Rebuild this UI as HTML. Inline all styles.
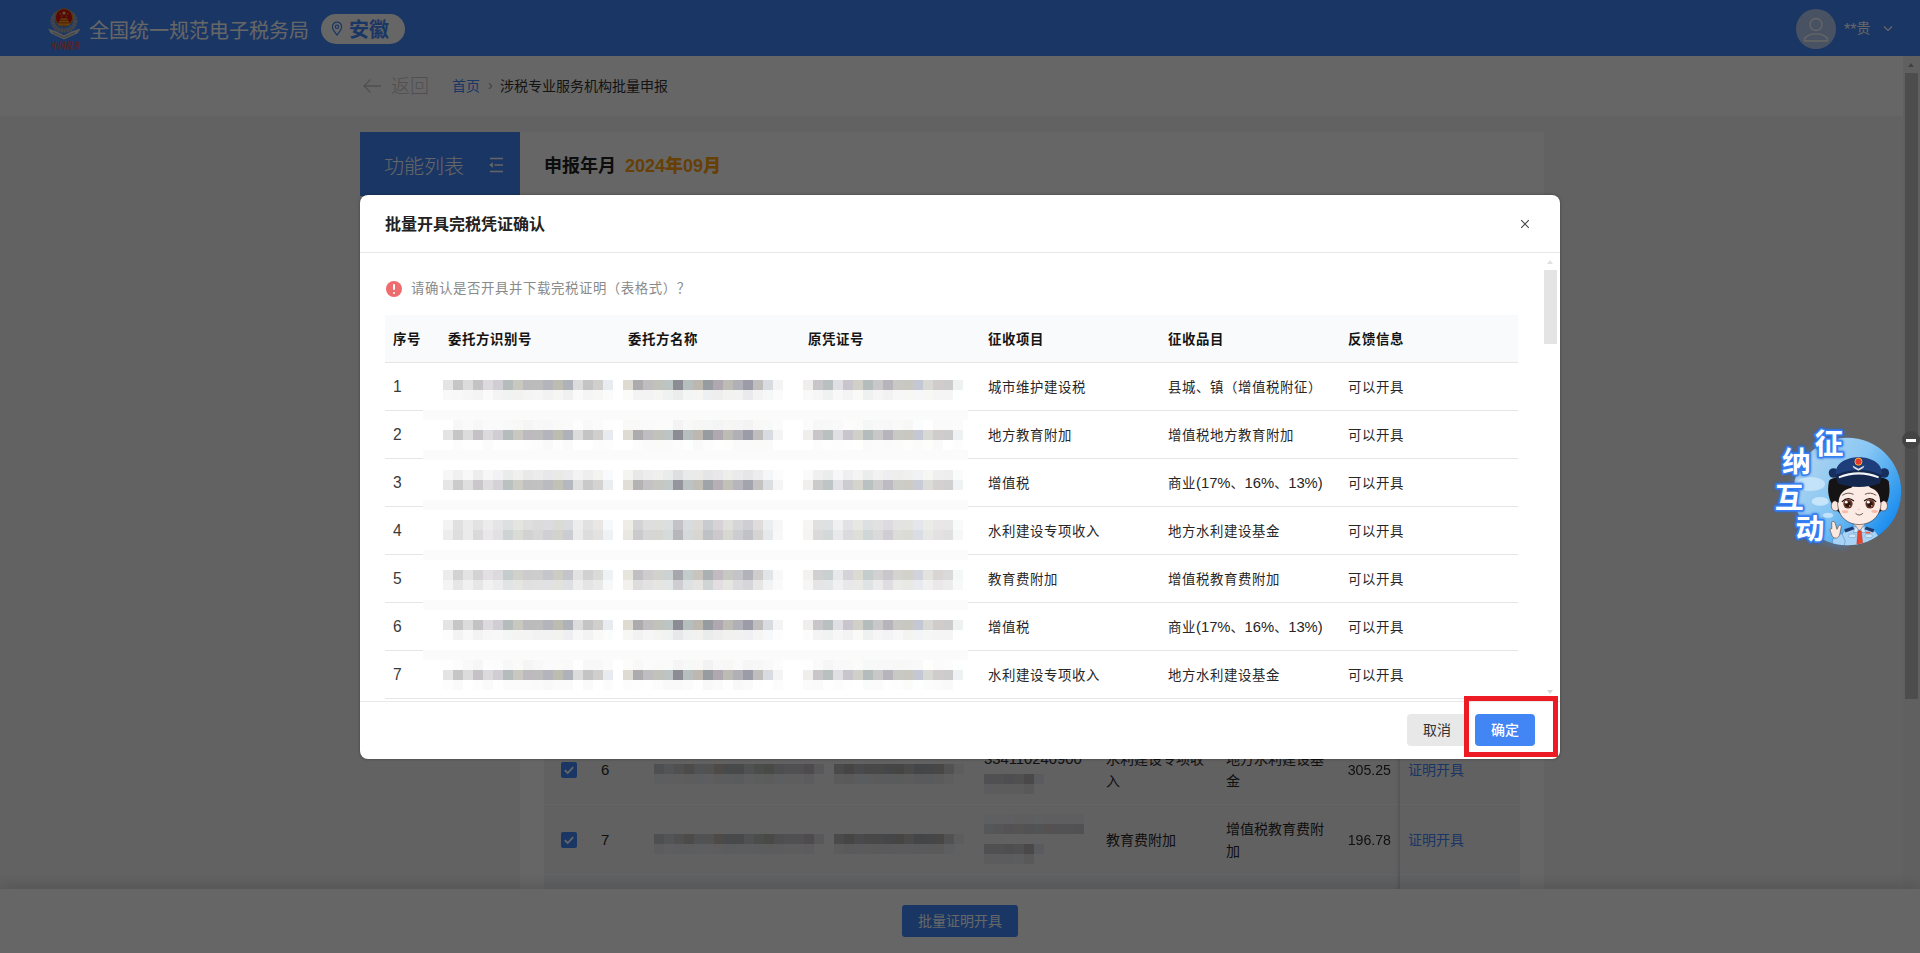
<!DOCTYPE html>
<html lang="zh-CN">
<head>
<meta charset="utf-8">
<title>批量开具完税凭证确认</title>
<style>
*{box-sizing:border-box;margin:0;padding:0}
html,body{width:1920px;height:953px;overflow:hidden}
body{position:relative;background:#f5f5f5;font-family:"Liberation Sans","Noto Sans CJK SC",sans-serif;font-size:14px;color:#333}
.abs{position:absolute}
.ms{position:absolute}
/* header */
#hd{position:absolute;left:0;top:0;width:1920px;height:56px;background:#4387fa}
#hd .title{position:absolute;left:89px;top:0;line-height:62px;font-size:20px;color:#fff;letter-spacing:0;white-space:nowrap}
#pill{position:absolute;left:321px;top:14px;width:84px;height:30px;border-radius:15px;background:#fff}
#pill span{position:absolute;left:28px;top:1px;line-height:30px;font-size:20px;font-weight:700;color:#4387fa;white-space:nowrap}
#avatar{position:absolute;left:1796px;top:9px;width:40px;height:40px;border-radius:20px;background:#b5cdf5}
#uname{position:absolute;left:1844px;top:0;line-height:56px;font-size:14px;color:#fff;white-space:nowrap}
/* breadcrumb */
#bc{position:absolute;left:0;top:56px;width:1903px;height:60px;background:#fff}
#bc .back{position:absolute;left:391px;top:0;line-height:62px;font-size:19px;font-weight:300;color:#c8c8c8;white-space:nowrap}
#bc .home{position:absolute;left:452px;top:0;line-height:61px;font-size:14px;color:#4387fa;white-space:nowrap}
#bc .sep{position:absolute;left:488px;top:0;line-height:59px;font-size:14px;color:#999}
#bc .cur{position:absolute;left:500px;top:0;line-height:61px;font-size:14px;color:#333;white-space:nowrap}
/* side */
#side{position:absolute;left:360px;top:132px;width:160px;height:64px;background:#4387fa}
#side span{position:absolute;left:24px;top:0;line-height:70px;font-size:20px;font-weight:300;color:#fff;white-space:nowrap}
#card{position:absolute;left:520px;top:132px;width:1024px;height:830px;background:#fff}
#card .ym{position:absolute;left:24px;top:0;line-height:68px;font-size:18px;font-weight:700;color:#222;white-space:nowrap}
#card .ym b{color:#ffa00a;margin-left:9px}
#tbl{position:absolute;left:544px;top:700px;width:976px;height:200px;background:#f2f3f6}
.bgrow{position:absolute;left:544px;width:976px;height:1px;background:#fdfdfe}
.bt{position:absolute;font-size:14px;line-height:22px;color:#2a2a2a;white-space:nowrap}
.lnk{color:#4387fa}
.num{transform:scaleX(.945);transform-origin:100% 50%}
.cb{position:absolute;left:561px;width:16px;height:16px;border-radius:2px;background:#4387fa}
#fixcol{position:absolute;left:1398px;top:700px;width:122px;height:200px;background:#f2f3f6;border-left:2px solid #d9dade;box-shadow:-3px 0 5px -3px rgba(0,0,0,.08)}
/* footer */
#ft{position:absolute;left:0;top:889px;width:1920px;height:64px;background:#fff;box-shadow:0 -4px 14px rgba(0,0,0,.14)}
#ft .btn{position:absolute;left:902px;top:16px;width:116px;height:32px;border-radius:3px;background:#4387fa;color:#fff;font-size:14px;line-height:32px;text-align:center}
/* page scrollbar */
#sb{position:absolute;left:1903px;top:56px;width:17px;height:833px;background:#f1f1f1}
#sb .th{position:absolute;left:2px;top:17px;width:13px;height:626px;background:#c1c1c1}
#sb .up{position:absolute;left:5px;top:7px;width:0;height:0;border-left:3.5px solid transparent;border-right:3.5px solid transparent;border-bottom:4px solid #a3a3a3}
#mask{position:absolute;left:0;top:0;width:1920px;height:953px;background:rgba(0,0,0,.6)}
/* modal */
#md{position:absolute;left:360px;top:195px;width:1200px;height:564px;background:#fff;border-radius:8px;overflow:hidden;box-shadow:0 0 3px rgba(0,0,0,.35)}
#md .ttl{position:absolute;left:25px;top:16px;line-height:28px;font-size:16px;font-weight:700;color:#222;white-space:nowrap}
#md .hl{position:absolute;left:0;top:57px;width:1200px;height:1px;background:#e8e8e8}
#md .fl{position:absolute;left:0;top:506px;width:1200px;height:1px;background:#e8e8e8}
#md .tip{position:absolute;left:51px;top:82px;line-height:24px;font-size:13.400px;letter-spacing:.600px;color:#8a8a8a;white-space:nowrap}
#warn{position:absolute;left:26px;top:86px;width:16px;height:16px;border-radius:8px;background:#ee6b6e}
#warn i{position:absolute;left:7px;top:3px;width:2px;height:6px;background:#fff;border-radius:1px}
#warn b{position:absolute;left:7px;top:10.5px;width:2px;height:2px;background:#fff;border-radius:1px}
#th{position:absolute;left:25px;top:120px;width:1133px;height:47px;background:#f9fafb}
.hline{position:absolute;left:25px;width:1133px;height:1px;background:#e6e6e6}
.h{position:absolute;top:120px;line-height:49px;font-size:13.400px;letter-spacing:.600px;font-weight:700;color:#141414;white-space:nowrap}
.c{position:absolute;line-height:49px;font-size:13.400px;letter-spacing:.600px;color:#262626;white-space:nowrap}
.c.n{font-size:15.600px;color:#3a3a3a;line-height:47px;letter-spacing:0}
.c i{font-style:normal;font-size:14.800px;letter-spacing:0}
#msb .th{position:absolute;left:1184px;top:75px;width:13px;height:74px;background:#e4e4e4}
#msb .up{position:absolute;left:1187px;top:65px;width:0;height:0;border-left:3.5px solid transparent;border-right:3.5px solid transparent;border-bottom:4px solid #e0e0e0}
#msb .dn{position:absolute;left:1187px;top:495px;width:0;height:0;border-left:3.5px solid transparent;border-right:3.5px solid transparent;border-top:4px solid #d8d8d8}
#cancel{position:absolute;left:1047px;top:519px;width:60px;height:32px;border-radius:4px;background:#e8e8e8;color:#333;font-size:14px;line-height:32px;text-align:center}
#ok{position:absolute;left:1115px;top:519px;width:60px;height:32px;border-radius:4px;background:#4285f4;color:#fff;font-size:14px;font-weight:500;line-height:32px;text-align:center}
#red{position:absolute;left:1464px;top:696px;width:94px;height:61px;border:5px solid #ed1c24}
#minus{position:absolute;left:1902px;top:431px;width:18px;height:18px;border-radius:9px;background:#444}
#minus i{position:absolute;left:4px;top:8px;width:10px;height:2.500px;background:#fff}
</style>
</head>
<body>
<!-- ============ underlying page ============ -->
<div id="hd">
  <svg class="abs" style="left:44px;top:4px" width="42" height="50" viewBox="0 0 42 50">
    <ellipse cx="20" cy="17" rx="11.3" ry="9.6" fill="none" stroke="#a9adb3" stroke-width="4.400" stroke-dasharray="2.400 0.500"/>
    <path d="M4.200 24.600l7.800 2.600 8 4 8-4 8.600-2.600-2.800 4.600-13.800 6.200-13.400-6.200z" fill="#d9dbde"/>
    <path d="M9 28.500l11 5 11-5" fill="none" stroke="#8f949a" stroke-width="0.900"/>
    <circle cx="20" cy="13.500" r="8.700" fill="#d7140f" stroke="#e8861c" stroke-width="1.100"/>
    <path d="M20 6.800l.6 1.500 1.600.1-1.200 1 .4 1.600-1.400-.9-1.400.9.400-1.600-1.200-1 1.600-.1z" fill="#ffe27a"/>
    <circle cx="16.300" cy="9.800" r="0.600" fill="#ffe27a"/><circle cx="23.700" cy="9.800" r="0.600" fill="#ffe27a"/><circle cx="17.600" cy="12" r="0.600" fill="#ffe27a"/><circle cx="22.400" cy="12" r="0.600" fill="#ffe27a"/>
    <path d="M14.500 18.600h11l-1.200-2.200h-8.600z M16 15.800h8l-.9-1.500h-6.200z M14 19.300h12v2.200h-12z" fill="#f0a326"/>
    <text x="6.500" y="45" textLength="29" lengthAdjust="spacingAndGlyphs" font-size="9.200" font-weight="700" fill="#f04a28" font-family="'Liberation Serif','Noto Serif CJK SC',serif" font-style="italic">中国税务</text>
  </svg>
  <div class="title">全国统一规范电子税务局</div>
  <div id="pill">
    <svg class="abs" style="left:10px;top:7px" width="12" height="16" viewBox="0 0 12 16"><path d="M6 1.200c-2.700 0-4.600 2-4.600 4.500 0 2.700 2.300 5.500 4.600 8.300 2.300-2.800 4.600-5.600 4.600-8.300 0-2.500-1.900-4.500-4.600-4.500z" fill="none" stroke="#4387fa" stroke-width="1.200"/><circle cx="6" cy="5.800" r="1.700" fill="none" stroke="#4387fa" stroke-width="1.200"/></svg>
    <span>安徽</span>
  </div>
  <div id="avatar">
    <svg class="abs" style="left:0;top:0" width="40" height="40" viewBox="0 0 40 40"><circle cx="20" cy="15.500" r="6" fill="none" stroke="#fff" stroke-width="1.300"/><path d="M8.500 32v-2.500c2.500-3.200 7-4.700 11.500-4.700s9 1.500 11.500 4.700v2.500z" fill="none" stroke="#fff" stroke-width="1.300"/></svg>
  </div>
  <div id="uname"><span style="font-size:16px;vertical-align:-1.500px">**</span>贵</div>
  <svg class="abs" style="left:1883px;top:25px" width="10" height="8" viewBox="0 0 10 8"><path d="M1 1.500l4 4 4-4" fill="none" stroke="#fff" stroke-width="1.200"/></svg>
</div>
<div id="bc">
  <svg class="abs" style="left:362px;top:22px" width="20" height="16" viewBox="0 0 20 16"><path d="M19 8H2M8.500 1.500L2 8l6.500 6.500" fill="none" stroke="#c8c8c8" stroke-width="1.400"/></svg>
  <div class="back">返回</div>
  <div class="home">首页</div>
  <div class="sep">›</div>
  <div class="cur">涉税专业服务机构批量申报</div>
</div>
<div id="side"><span>功能列表</span>
  <svg class="abs" style="left:128px;top:25px" width="16" height="16" viewBox="0 0 16 16"><path d="M2 1.500h13M6.500 8h8.500M2 14.500h13" stroke="#fff" stroke-width="1.300" fill="none"/><path d="M4.800 5.200v5.600l-3.600-2.800z" fill="#fff"/></svg>
</div>
<div id="card"><div class="ym">申报年月<b>2024年09月</b></div></div>
<div id="tbl"></div>
<div class="bgrow" style="top:804px"></div>
<div class="bgrow" style="top:874px"></div>
<div class="ms" style="left:654px;top:764px;width:170px;height:10px;background:linear-gradient(90deg,#c4c6c8 0px 10px,#d0d2d6 10px 20px,#c8c8c8 20px 30px,#c0bcb8 30px 40px,#c8ccd0 40px 50px,#ccccd0 50px 60px,#c0b8b4 60px 70px,#b4b6b8 70px 80px,#b4b8ba 80px 90px,#c8cad0 90px 100px,#bcc0bc 100px 110px,#b4b8b0 110px 120px,#c4c4c8 120px 130px,#c8c8cc 130px 140px,#c8c8ca 140px 150px,#c0bcc0 150px 160px,#dcdde2 160px 170px)"></div>
<div class="ms" style="left:654px;top:774px;width:160px;height:10px;background:linear-gradient(90deg,#e9ebed 0px 10px,#ebecef 10px 20px,#eaebed 20px 30px,#e8e8e9 30px 40px,#e7e9ec 40px 50px,#ebebef 50px 60px,#e7e6e8 60px 70px,#e4e5e8 70px 80px,#e2e4e7 80px 90px,#eaebef 90px 100px,#e6e8e9 100px 110px,#e5e7e7 110px 120px,#e9eaed 120px 130px,#eaeaee 130px 140px,#eaebee 140px 150px,#e7e6ea 150px 160px)"></div>
<div class="ms" style="left:834px;top:764px;width:130px;height:10px;background:linear-gradient(90deg,#b8b8ba 0px 10px,#b0acaa 10px 20px,#b8b8c0 20px 30px,#b4b4b6 30px 40px,#b4b4b4 40px 50px,#acaeb4 50px 60px,#aeaca8 60px 70px,#b8b8bc 70px 80px,#a8acb0 80px 90px,#aab0b2 90px 100px,#b4b2b0 100px 110px,#ccccd0 110px 120px,#e6e8ee 120px 130px)"></div>
<div class="ms" style="left:834px;top:774px;width:120px;height:10px;background:linear-gradient(90deg,#e3e4e6 0px 10px,#e2e2e3 10px 20px,#e4e5e9 20px 30px,#e4e5e8 30px 40px,#e3e4e6 40px 50px,#e2e3e7 50px 60px,#e2e3e4 60px 70px,#e5e6e9 70px 80px,#e0e2e5 80px 90px,#dfe1e4 90px 100px,#e4e4e6 100px 110px,#eaebee 110px 120px)"></div>
<div class="ms" style="left:654px;top:834px;width:170px;height:10px;background:linear-gradient(90deg,#c4c6c8 0px 10px,#d0d2d6 10px 20px,#c8c8c8 20px 30px,#c0bcb8 30px 40px,#c8ccd0 40px 50px,#ccccd0 50px 60px,#c0b8b4 60px 70px,#b4b6b8 70px 80px,#b4b8ba 80px 90px,#c8cad0 90px 100px,#bcc0bc 100px 110px,#b4b8b0 110px 120px,#c4c4c8 120px 130px,#c8c8cc 130px 140px,#c8c8ca 140px 150px,#c0bcc0 150px 160px,#dcdde2 160px 170px)"></div>
<div class="ms" style="left:654px;top:844px;width:160px;height:10px;background:linear-gradient(90deg,#e6e7ea 0px 10px,#ebecef 10px 20px,#e7e8ea 20px 30px,#e8e8e9 30px 40px,#e8eaed 40px 50px,#ebecef 50px 60px,#e9e8e9 60px 70px,#e4e6e8 70px 80px,#e6e8eb 80px 90px,#e8e9ed 90px 100px,#e4e6e8 100px 110px,#e5e6e7 110px 120px,#e6e7ea 120px 130px,#e8e8ec 130px 140px,#e8e9ec 140px 150px,#e7e7eb 150px 160px)"></div>
<div class="ms" style="left:834px;top:834px;width:130px;height:10px;background:linear-gradient(90deg,#b8b8ba 0px 10px,#b0acaa 10px 20px,#b8b8c0 20px 30px,#b4b4b6 30px 40px,#b4b4b4 40px 50px,#acaeb4 50px 60px,#aeaca8 60px 70px,#b8b8bc 70px 80px,#a8acb0 80px 90px,#aab0b2 90px 100px,#b4b2b0 100px 110px,#ccccd0 110px 120px,#e6e8ee 120px 130px)"></div>
<div class="ms" style="left:834px;top:844px;width:120px;height:10px;background:linear-gradient(90deg,#e5e6e9 0px 10px,#e2e1e3 10px 20px,#e3e4e8 20px 30px,#e3e4e7 30px 40px,#e1e2e4 40px 50px,#e0e1e5 50px 60px,#e3e3e4 60px 70px,#e4e4e8 70px 80px,#e0e1e5 80px 90px,#dee0e3 90px 100px,#e2e2e4 100px 110px,#e9eaed 110px 120px)"></div>
<div class="ms" style="left:984px;top:774px;width:60px;height:10px;background:linear-gradient(90deg,#c8c8cc 0px 10px,#c8c8ca 10px 20px,#c4c4c8 20px 30px,#c8c8c8 30px 40px,#b8b4b4 40px 50px,#e2e4ea 50px 60px)"></div>
<div class="ms" style="left:984px;top:784px;width:50px;height:10px;background:linear-gradient(90deg,#e6e7ea 0px 10px,#e5e6e8 10px 20px,#e5e6e9 20px 30px,#e6e7e9 30px 40px,#dfdee0 40px 50px)"></div>
<div class="ms" style="left:984px;top:814px;width:100px;height:10px;background:linear-gradient(90deg,#ecedf0 0px 10px,#eeeef2 10px 20px,#eeeef2 20px 30px,#ececee 30px 40px,#ececf0 40px 50px,#ecedf0 50px 60px,#ecebed 60px 70px,#ebecef 70px 80px,#ebecef 80px 90px,#ebebef 90px 100px)"></div>
<div class="ms" style="left:984px;top:824px;width:100px;height:10px;background:linear-gradient(90deg,#d8d9dc 0px 10px,#d5d5d9 10px 20px,#d2ced2 20px 30px,#d5d2cf 30px 40px,#ceced2 40px 50px,#ced0d2 50px 60px,#d5cbc8 60px 70px,#ceced2 70px 80px,#ceced2 80px 90px,#cbcbcf 90px 100px)"></div>
<div class="ms" style="left:984px;top:844px;width:60px;height:10px;background:linear-gradient(90deg,#c8c8cc 0px 10px,#c8c8ca 10px 20px,#c4c4c8 20px 30px,#c8c8c8 30px 40px,#b8b4b4 40px 50px,#e2e4ea 50px 60px)"></div>
<div class="ms" style="left:984px;top:854px;width:50px;height:10px;background:linear-gradient(90deg,#e5e5e9 0px 10px,#e7e7ea 10px 20px,#e4e5e8 20px 30px,#e7e8ea 30px 40px,#dfdfe1 40px 50px)"></div>
<div class="cb" style="top:762px"><svg class="abs" style="left:0;top:0" width="16" height="16" viewBox="0 0 16 16"><path d="M3.800 8.200l2.900 2.800 5.500-5.800" fill="none" stroke="#fff" stroke-width="1.800"/></svg></div>
<div class="cb" style="top:832px"><svg class="abs" style="left:0;top:0" width="16" height="16" viewBox="0 0 16 16"><path d="M3.800 8.200l2.900 2.800 5.500-5.800" fill="none" stroke="#fff" stroke-width="1.800"/></svg></div>
<div class="bt" style="left:601px;top:759px;font-size:15px">6</div>
<div class="bt" style="left:601px;top:829px;font-size:15px">7</div>
<div class="bt" style="left:984px;top:748px;font-size:14.800px">334110240900</div>
<div class="bt" style="left:1106px;top:748px">水利建设专项收<br>入</div>
<div class="bt" style="left:1226px;top:748px">地方水利建设基<br>金</div>
<div class="bt" style="left:1106px;top:829px">教育费附加</div>
<div class="bt" style="left:1226px;top:818px">增值税教育费附<br>加</div>
<div class="bt num" style="left:1300px;top:759px;width:91px;text-align:right;font-size:15px">305.25</div>
<div class="bt num" style="left:1300px;top:829px;width:91px;text-align:right;font-size:15px">196.78</div>
<div id="fixcol"></div>
<div class="bgrow" style="top:804px;left:1400px;width:120px"></div>
<div class="bgrow" style="top:874px;left:1400px;width:120px"></div>
<div class="bt lnk" style="left:1408px;top:759px">证明开具</div>
<div class="bt lnk" style="left:1408px;top:829px">证明开具</div>
<div id="sb"><div class="up"></div><div class="th"></div></div>
<div id="ft"><div class="btn">批量证明开具</div></div>
<div id="mask"></div>
<!-- ============ modal ============ -->
<div id="md">
  <div class="ttl">批量开具完税凭证确认</div>
  <svg class="abs" style="left:1160px;top:24px" width="10" height="10" viewBox="0 0 10 10"><path d="M1.200 1.200l7.600 7.600M8.800 1.200l-7.600 7.600" stroke="#444" stroke-width="1.100" fill="none"/></svg>
  <div class="hl"></div>
  <div id="warn"><i></i><b></b></div>
  <div class="tip">请确认是否开具并下载完税证明（表格式）？</div>
  <div id="th"></div>
  <div class="h" style="left:33px">序号</div>
  <div class="h" style="left:88px">委托方识别号</div>
  <div class="h" style="left:268px">委托方名称</div>
  <div class="h" style="left:448px">原凭证号</div>
  <div class="h" style="left:628px">征收项目</div>
  <div class="h" style="left:808px">征收品目</div>
  <div class="h" style="left:988px">反馈信息</div>
  <div class="hline" style="top:167px"></div>
  <div class="hline" style="top:215px"></div>
  <div class="hline" style="top:263px"></div>
  <div class="hline" style="top:311px"></div>
  <div class="hline" style="top:359px"></div>
  <div class="hline" style="top:407px"></div>
  <div class="hline" style="top:455px"></div>
  <div class="hline" style="top:503px"></div>
  <div class="abs" style="left:63px;top:175px;width:545px;height:320px;background:#fff"></div>
<div class="ms" style="left:63px;top:215px;width:545px;height:10px;background:#fbfbfb"></div>
<div class="ms" style="left:63px;top:255px;width:545px;height:10px;background:#fbfbfb"></div>
<div class="ms" style="left:63px;top:305px;width:545px;height:10px;background:#fbfbfb"></div>
<div class="ms" style="left:63px;top:355px;width:545px;height:10px;background:#fbfbfb"></div>
<div class="ms" style="left:63px;top:405px;width:545px;height:10px;background:#fbfbfb"></div>
<div class="ms" style="left:63px;top:455px;width:545px;height:10px;background:#fbfbfb"></div>
<div class="ms" style="left:83px;top:185px;width:170px;height:10px;background:linear-gradient(90deg,#e4e4e4 0px 10px,#c6c6c6 10px 20px,#dcdcdc 20px 30px,#c4c2c4 30px 40px,#dcdadc 40px 50px,#d0ced4 50px 60px,#b4bcbc 60px 70px,#c8c8c0 70px 80px,#bcbabc 80px 90px,#bcbcbc 90px 100px,#b4b4bc 100px 110px,#bcbcb0 110px 120px,#b0b2ba 120px 130px,#dcdcdc 130px 140px,#c4c4c4 140px 150px,#d0cfcd 150px 160px,#e8ecf0 160px 170px)"></div>
<div class="ms" style="left:263px;top:185px;width:160px;height:10px;background:linear-gradient(90deg,#dddbd2 0px 10px,#acacae 10px 20px,#bfbdbf 20px 30px,#c1c2ba 30px 40px,#bcc4c4 40px 50px,#8c8c94 50px 60px,#b6bebe 60px 70px,#bcb8b0 70px 80px,#969ca0 80px 90px,#b0a8b0 90px 100px,#bcbcb4 100px 110px,#b0b0b6 110px 120px,#9c9ca8 120px 130px,#c0bebc 130px 140px,#d8dce0 140px 150px,#f4f4f4 150px 160px)"></div>
<div class="ms" style="left:443px;top:185px;width:160px;height:10px;background:linear-gradient(90deg,#f0eeec 0px 10px,#c8c6c8 10px 20px,#b8c0c0 20px 30px,#e0dfe4 30px 40px,#c8c6cc 40px 50px,#d0d0c8 50px 60px,#b4bcbc 60px 70px,#c8c8c8 70px 80px,#b8b4bc 80px 90px,#c8c8c4 90px 100px,#c8c8c0 100px 110px,#c4c8d4 110px 120px,#d8d8d4 120px 130px,#d0cccc 130px 140px,#cccccc 140px 150px,#eef2f2 150px 160px)"></div>
<div class="ms" style="left:83px;top:195px;width:170px;height:10px;background:linear-gradient(90deg,#f9f9f9 0px 10px,#f8f8f8 10px 20px,#f6f6f6 20px 30px,#f4f4f4 30px 40px,#fafafa 40px 50px,#f4f4f5 50px 60px,#f1f3f3 60px 70px,#f2f2f1 70px 80px,#f4f4f4 80px 90px,#f5f5f5 90px 100px,#f2f2f3 100px 110px,#f5f5f3 110px 120px,#f0f0f1 120px 130px,#fafafa 130px 140px,#f5f5f5 140px 150px,#f7f7f6 150px 160px,#fbfbfc 160px 170px)"></div>
<div class="ms" style="left:263px;top:195px;width:160px;height:10px;background:linear-gradient(90deg,#fbfbf9 0px 10px,#f3f3f3 10px 20px,#f3f3f3 20px 30px,#f5f5f4 30px 40px,#f0f2f2 40px 50px,#ececed 50px 60px,#f3f4f4 60px 70px,#f6f5f4 70px 80px,#eeeff0 80px 90px,#efeeef 90px 100px,#f2f2f1 100px 110px,#f2f2f3 110px 120px,#eaeaec 120px 130px,#f3f3f3 130px 140px,#f6f7f7 140px 150px,#fbfbfb 150px 160px)"></div>
<div class="ms" style="left:443px;top:195px;width:160px;height:10px;background:linear-gradient(90deg,#faf9f9 0px 10px,#f7f6f7 10px 20px,#f0f1f1 20px 30px,#f8f8f9 30px 40px,#f4f4f5 40px 50px,#f9f9f7 50px 60px,#eff0f0 60px 70px,#f5f5f5 70px 80px,#f3f2f3 80px 90px,#f7f7f7 90px 100px,#f7f7f6 100px 110px,#f7f7f9 110px 120px,#f7f7f6 120px 130px,#f6f5f5 130px 140px,#f5f5f5 140px 150px,#feffff 150px 160px)"></div>
<div class="ms" style="left:83px;top:225px;width:170px;height:10px;background:linear-gradient(90deg,#ffffff 0px 10px,#f7f7f7 10px 20px,#fafafa 20px 30px,#f7f7f7 30px 40px,#fafafa 40px 50px,#fafafb 50px 60px,#f8f9f9 60px 70px,#f8f8f7 70px 80px,#f5f5f5 80px 90px,#f8f8f8 90px 100px,#f7f7f8 100px 110px,#f9f9f7 110px 120px,#fafafb 120px 130px,#fdfdfd 130px 140px,#f9f9f9 140px 150px,#fbfbfb 150px 160px,#fefeff 160px 170px)"></div>
<div class="ms" style="left:263px;top:225px;width:160px;height:10px;background:linear-gradient(90deg,#f9f9f8 0px 10px,#f9f9f9 10px 20px,#fafafa 20px 30px,#fbfbfa 30px 40px,#fafbfb 40px 50px,#f3f3f4 50px 60px,#f7f8f8 60px 70px,#f6f6f5 70px 80px,#f5f6f6 80px 90px,#f4f4f4 90px 100px,#f6f6f5 100px 110px,#f5f5f6 110px 120px,#f3f3f4 120px 130px,#f8f8f7 130px 140px,#f8f9f9 140px 150px,#fbfbfb 150px 160px)"></div>
<div class="ms" style="left:443px;top:225px;width:160px;height:10px;background:linear-gradient(90deg,#fbfbfb 0px 10px,#f7f7f7 10px 20px,#f7f8f8 20px 30px,#f9f9f9 30px 40px,#fcfcfc 40px 50px,#fbfbfa 50px 60px,#f5f6f6 60px 70px,#f8f8f8 70px 80px,#f7f7f7 80px 90px,#f9f9f8 90px 100px,#f7f7f6 100px 110px,#fbfcfd 110px 120px,#fefefe 120px 130px,#fafafa 130px 140px,#fafafa 140px 150px,#fbfbfb 150px 160px)"></div>
<div class="ms" style="left:83px;top:235px;width:170px;height:10px;background:linear-gradient(90deg,#e4e4e4 0px 10px,#c6c6c6 10px 20px,#dcdcdc 20px 30px,#c4c2c4 30px 40px,#dcdadc 40px 50px,#d0ced4 50px 60px,#b4bcbc 60px 70px,#c8c8c0 70px 80px,#bcbabc 80px 90px,#bcbcbc 90px 100px,#b4b4bc 100px 110px,#bcbcb0 110px 120px,#b0b2ba 120px 130px,#dcdcdc 130px 140px,#c4c4c4 140px 150px,#d0cfcd 150px 160px,#e8ecf0 160px 170px)"></div>
<div class="ms" style="left:263px;top:235px;width:160px;height:10px;background:linear-gradient(90deg,#dddbd2 0px 10px,#acacae 10px 20px,#bfbdbf 20px 30px,#c1c2ba 30px 40px,#bcc4c4 40px 50px,#8c8c94 50px 60px,#b6bebe 60px 70px,#bcb8b0 70px 80px,#969ca0 80px 90px,#b0a8b0 90px 100px,#bcbcb4 100px 110px,#b0b0b6 110px 120px,#9c9ca8 120px 130px,#c0bebc 130px 140px,#d8dce0 140px 150px,#f4f4f4 150px 160px)"></div>
<div class="ms" style="left:443px;top:235px;width:160px;height:10px;background:linear-gradient(90deg,#f0eeec 0px 10px,#c8c6c8 10px 20px,#b8c0c0 20px 30px,#e0dfe4 30px 40px,#c8c6cc 40px 50px,#d0d0c8 50px 60px,#b4bcbc 60px 70px,#c8c8c8 70px 80px,#b8b4bc 80px 90px,#c8c8c4 90px 100px,#c8c8c0 100px 110px,#c4c8d4 110px 120px,#d8d8d4 120px 130px,#d0cccc 130px 140px,#cccccc 140px 150px,#eef2f2 150px 160px)"></div>
<div class="ms" style="left:83px;top:245px;width:170px;height:10px;background:linear-gradient(90deg,#ffffff 0px 10px,#fcfcfc 10px 20px,#fefefe 20px 30px,#fefefe 30px 40px,#fbfbfb 40px 50px,#fefefe 50px 60px,#fefefe 60px 70px,#fefefe 70px 80px,#fdfdfd 80px 90px,#fcfcfc 90px 100px,#f9f9fa 100px 110px,#fdfdfd 110px 120px,#fafafb 120px 130px,#ffffff 130px 140px,#ffffff 140px 150px,#fcfcfc 150px 160px,#fdfdfe 160px 170px)"></div>
<div class="ms" style="left:263px;top:245px;width:160px;height:10px;background:linear-gradient(90deg,#ffffff 0px 10px,#fcfcfc 10px 20px,#fafafa 20px 30px,#fafaf9 30px 40px,#fafafa 40px 50px,#fcfcfc 50px 60px,#fdfefe 60px 70px,#faf9f9 70px 80px,#fcfcfc 80px 90px,#fefefe 90px 100px,#fdfdfc 100px 110px,#fafafa 110px 120px,#fafafb 120px 130px,#fafaf9 130px 140px,#fafafb 140px 150px,#ffffff 150px 160px)"></div>
<div class="ms" style="left:443px;top:245px;width:160px;height:10px;background:linear-gradient(90deg,#ffffff 0px 10px,#fcfcfc 10px 20px,#fefefe 20px 30px,#fdfdfd 30px 40px,#fefeff 40px 50px,#fffffe 50px 60px,#fafafa 60px 70px,#fbfbfb 70px 80px,#fafafa 80px 90px,#fbfbfa 90px 100px,#fdfdfc 100px 110px,#fbfbfb 110px 120px,#fdfdfc 120px 130px,#fafafa 130px 140px,#ffffff 140px 150px,#fdfdfd 150px 160px)"></div>
<div class="ms" style="left:83px;top:275px;width:170px;height:10px;background:linear-gradient(90deg,#f7f7f7 0px 10px,#f0f0f0 10px 20px,#f8f8f8 20px 30px,#eeedee 30px 40px,#f8f7f8 40px 50px,#f2f1f3 50px 60px,#eaecec 60px 70px,#f0f0ee 70px 80px,#e9e9e9 80px 90px,#ececec 90px 100px,#e8e8ea 100px 110px,#e9e9e6 110px 120px,#ebebed 120px 130px,#f3f3f3 130px 140px,#eeeeee 140px 150px,#f3f3f2 150px 160px,#f9fafb 160px 170px)"></div>
<div class="ms" style="left:263px;top:275px;width:160px;height:10px;background:linear-gradient(90deg,#f4f4f1 0px 10px,#e8e8e8 10px 20px,#ededed 20px 30px,#eff0ed 30px 40px,#eaecec 40px 50px,#dfdfe1 50px 60px,#e9ebeb 60px 70px,#ebeae8 70px 80px,#e3e5e6 80px 90px,#e9e7e9 90px 100px,#ededea 100px 110px,#eaeaec 110px 120px,#e6e6e9 120px 130px,#edecec 130px 140px,#f5f6f7 140px 150px,#fcfcfc 150px 160px)"></div>
<div class="ms" style="left:443px;top:275px;width:160px;height:10px;background:linear-gradient(90deg,#fbfafa 0px 10px,#f1f0f1 10px 20px,#ebeded 20px 30px,#f7f6f8 30px 40px,#efeff1 40px 50px,#f4f4f2 50px 60px,#ebeded 60px 70px,#f2f2f2 70px 80px,#eeedef 80px 90px,#eeeeed 90px 100px,#f0f0ee 100px 110px,#f1f2f6 110px 120px,#f6f6f5 120px 130px,#f0efef 130px 140px,#eeeeee 140px 150px,#fafbfb 150px 160px)"></div>
<div class="ms" style="left:83px;top:285px;width:170px;height:10px;background:linear-gradient(90deg,#e6e6e6 0px 10px,#cbcbcb 10px 20px,#dfdfdf 20px 30px,#c9c7c9 30px 40px,#dfdddf 40px 50px,#d4d2d7 50px 60px,#bac1c1 60px 70px,#ccccc5 70px 80px,#c1c0c1 80px 90px,#c1c1c1 90px 100px,#babac1 100px 110px,#c1c1b6 110px 120px,#b6b8c0 120px 130px,#dfdfdf 130px 140px,#c9c9c9 140px 150px,#d4d3d1 150px 160px,#eaeef1 160px 170px)"></div>
<div class="ms" style="left:263px;top:285px;width:160px;height:10px;background:linear-gradient(90deg,#e0ded6 0px 10px,#b3b3b4 10px 20px,#c4c2c4 20px 30px,#c6c7c0 30px 40px,#c1c9c9 40px 50px,#95959d 50px 60px,#bcc3c3 60px 70px,#c1beb6 70px 80px,#9ea4a8 80px 90px,#b6afb6 90px 100px,#c1c1ba 100px 110px,#b6b6bc 110px 120px,#a4a4af 120px 130px,#c5c3c1 130px 140px,#dbdfe2 140px 150px,#f5f5f5 150px 160px)"></div>
<div class="ms" style="left:443px;top:285px;width:160px;height:10px;background:linear-gradient(90deg,#f1efee 0px 10px,#cccbcc 10px 20px,#bec5c5 20px 30px,#e2e2e6 30px 40px,#cccbd0 40px 50px,#d4d4cc 50px 60px,#bac1c1 60px 70px,#cccccc 70px 80px,#bebac1 80px 90px,#ccccc9 90px 100px,#ccccc5 100px 110px,#c9ccd7 110px 120px,#dbdbd7 120px 130px,#d4d0d0 130px 140px,#d0d0d0 140px 150px,#eff3f3 150px 160px)"></div>
<div class="ms" style="left:83px;top:325px;width:170px;height:10px;background:linear-gradient(90deg,#f3f3f3 0px 10px,#e0e0e0 10px 20px,#ebebeb 20px 30px,#e3e2e3 30px 40px,#edeced 40px 50px,#e5e4e7 50px 60px,#dce0e0 60px 70px,#e4e4e0 70px 80px,#dfdedf 80px 90px,#dbdbdb 90px 100px,#dcdce0 100px 110px,#dbdbd5 110px 120px,#dadbdf 120px 130px,#ededed 130px 140px,#e1e1e1 140px 150px,#e8e7e6 150px 160px,#f6f8fa 160px 170px)"></div>
<div class="ms" style="left:263px;top:325px;width:160px;height:10px;background:linear-gradient(90deg,#edece7 0px 10px,#d3d3d4 10px 20px,#dfdedf 20px 30px,#dedfdb 30px 40px,#dbdfdf 40px 50px,#c3c3c7 50px 60px,#d8dcdc 60px 70px,#dcdad6 70px 80px,#c9ccce 80px 90px,#d6d2d6 90px 100px,#dfdfdb 100px 110px,#d6d6d9 110px 120px,#ceced4 120px 130px,#dedddc 130px 140px,#ebedef 140px 150px,#f7f7f7 150px 160px)"></div>
<div class="ms" style="left:443px;top:325px;width:160px;height:10px;background:linear-gradient(90deg,#f6f5f4 0px 10px,#e1e0e1 10px 20px,#dde1e1 20px 30px,#f0eff2 30px 40px,#e2e1e4 40px 50px,#e7e7e3 50px 60px,#dce0e0 60px 70px,#e1e1e1 70px 80px,#dddbdf 80px 90px,#e3e3e1 90px 100px,#e3e3df 100px 110px,#e4e6ec 110px 120px,#ebebe9 120px 130px,#e8e6e6 130px 140px,#e7e7e7 140px 150px,#f9fbfb 150px 160px)"></div>
<div class="ms" style="left:83px;top:335px;width:170px;height:10px;background:linear-gradient(90deg,#ededed 0px 10px,#dedede 10px 20px,#ebebeb 20px 30px,#dbdadb 30px 40px,#e9e7e9 40px 50px,#e1e0e3 50px 60px,#ced3d3 60px 70px,#dbdbd6 70px 80px,#d3d2d3 80px 90px,#d7d7d7 90px 100px,#cfcfd4 100px 110px,#d3d3cc 110px 120px,#cccdd2 120px 130px,#ebebeb 130px 140px,#dddddd 140px 150px,#e3e2e1 150px 160px,#eff2f4 160px 170px)"></div>
<div class="ms" style="left:263px;top:335px;width:160px;height:10px;background:linear-gradient(90deg,#e8e7e2 0px 10px,#cacacc 10px 20px,#d7d6d7 20px 30px,#d7d7d2 30px 40px,#d5dada 40px 50px,#b6b6bb 50px 60px,#d5d9d9 60px 70px,#d8d6d1 70px 80px,#bec2c4 80px 90px,#ccc8cc 90px 100px,#d8d8d3 100px 110px,#cdcdd1 110px 120px,#c1c1c8 120px 130px,#d5d4d2 130px 140px,#e6e9eb 140px 150px,#f8f8f8 150px 160px)"></div>
<div class="ms" style="left:443px;top:335px;width:160px;height:10px;background:linear-gradient(90deg,#f6f4f3 0px 10px,#dbdadb 10px 20px,#d3d8d8 20px 30px,#e9e8eb 30px 40px,#dbdade 40px 50px,#dfdfda 50px 60px,#d0d5d5 60px 70px,#dadada 70px 80px,#d0ced3 80px 90px,#dcdcd9 90px 100px,#dbdbd6 100px 110px,#dbdde5 110px 120px,#e7e7e5 120px 130px,#e3e1e1 130px 140px,#e0e0e0 140px 150px,#f6f8f8 150px 160px)"></div>
<div class="ms" style="left:83px;top:375px;width:170px;height:10px;background:linear-gradient(90deg,#ececec 0px 10px,#d2d2d2 10px 20px,#e3e3e3 20px 30px,#d4d2d4 30px 40px,#e2e0e2 40px 50px,#dcdadf 50px 60px,#c5cccc 60px 70px,#d1d1cb 70px 80px,#cdcbcd 80px 90px,#cdcdcd 90px 100px,#c5c5cc 100px 110px,#ccccc3 110px 120px,#c3c5cb 120px 130px,#e2e2e2 130px 140px,#d1d1d1 140px 150px,#dadad8 150px 160px,#eff2f5 160px 170px)"></div>
<div class="ms" style="left:263px;top:375px;width:160px;height:10px;background:linear-gradient(90deg,#e6e5de 0px 10px,#c0c0c2 10px 20px,#ceccce 20px 30px,#d1d2cc 30px 40px,#ccd2d2 40px 50px,#a6a6ad 50px 60px,#c4cbcb 60px 70px,#c8c5bf 70px 80px,#abb0b3 80px 90px,#c1bac1 90px 100px,#c8c8c2 100px 110px,#c3c3c8 110px 120px,#b2b2bb 120px 130px,#cfcdcc 130px 140px,#e1e4e8 140px 150px,#f8f8f8 150px 160px)"></div>
<div class="ms" style="left:443px;top:375px;width:160px;height:10px;background:linear-gradient(90deg,#f3f2f0 0px 10px,#d1d0d1 10px 20px,#c9d0d0 20px 30px,#e8e8eb 30px 40px,#d4d3d7 40px 50px,#dbdbd4 50px 60px,#c5cccc 60px 70px,#d1d1d1 70px 80px,#c9c6cc 80px 90px,#d3d3cf 90px 100px,#d2d2cb 100px 110px,#d0d3dc 110px 120px,#e2e2df 120px 130px,#d9d5d5 130px 140px,#d9d9d9 140px 150px,#f5f8f8 150px 160px)"></div>
<div class="ms" style="left:83px;top:385px;width:170px;height:10px;background:linear-gradient(90deg,#f4f4f4 0px 10px,#e6e6e6 10px 20px,#f0f0f0 20px 30px,#e7e6e7 30px 40px,#f2f1f2 40px 50px,#ecebee 50px 60px,#e0e4e4 60px 70px,#e5e5e2 70px 80px,#e1e0e1 80px 90px,#e1e1e1 90px 100px,#e1e1e4 100px 110px,#e2e2dd 110px 120px,#dedfe2 120px 130px,#ededed 130px 140px,#e4e4e4 140px 150px,#eae9e9 150px 160px,#f6f8fa 160px 170px)"></div>
<div class="ms" style="left:263px;top:385px;width:160px;height:10px;background:linear-gradient(90deg,#f2f1ed 0px 10px,#ddddde 10px 20px,#e3e2e3 20px 30px,#e5e5e2 30px 40px,#e3e6e6 40px 50px,#ceced2 50px 60px,#dee1e1 60px 70px,#e5e4e0 70px 80px,#d1d4d5 80px 90px,#e1dde1 90px 100px,#e5e5e2 100px 110px,#dbdbdd 110px 120px,#d5d5da 120px 130px,#e6e6e5 130px 140px,#f1f3f5 140px 150px,#fafafa 150px 160px)"></div>
<div class="ms" style="left:443px;top:385px;width:160px;height:10px;background:linear-gradient(90deg,#f7f6f6 0px 10px,#e6e5e6 10px 20px,#e4e7e7 20px 30px,#f0f0f2 30px 40px,#e8e8ea 40px 50px,#e9e9e6 50px 60px,#e0e3e3 60px 70px,#ebebeb 70px 80px,#dfdde1 80px 90px,#eaeae8 90px 100px,#e8e8e5 100px 110px,#e9eaef 110px 120px,#f0f0ee 120px 130px,#eae8e8 130px 140px,#ececec 140px 150px,#f8f9f9 150px 160px)"></div>
<div class="ms" style="left:83px;top:425px;width:170px;height:10px;background:linear-gradient(90deg,#e4e4e4 0px 10px,#c6c6c6 10px 20px,#dcdcdc 20px 30px,#c4c2c4 30px 40px,#dcdadc 40px 50px,#d0ced4 50px 60px,#b4bcbc 60px 70px,#c8c8c0 70px 80px,#bcbabc 80px 90px,#bcbcbc 90px 100px,#b4b4bc 100px 110px,#bcbcb0 110px 120px,#b0b2ba 120px 130px,#dcdcdc 130px 140px,#c4c4c4 140px 150px,#d0cfcd 150px 160px,#e8ecf0 160px 170px)"></div>
<div class="ms" style="left:263px;top:425px;width:160px;height:10px;background:linear-gradient(90deg,#dddbd2 0px 10px,#acacae 10px 20px,#bfbdbf 20px 30px,#c1c2ba 30px 40px,#bcc4c4 40px 50px,#8c8c94 50px 60px,#b6bebe 60px 70px,#bcb8b0 70px 80px,#969ca0 80px 90px,#b0a8b0 90px 100px,#bcbcb4 100px 110px,#b0b0b6 110px 120px,#9c9ca8 120px 130px,#c0bebc 130px 140px,#d8dce0 140px 150px,#f4f4f4 150px 160px)"></div>
<div class="ms" style="left:443px;top:425px;width:160px;height:10px;background:linear-gradient(90deg,#f0eeec 0px 10px,#c8c6c8 10px 20px,#b8c0c0 20px 30px,#e0dfe4 30px 40px,#c8c6cc 40px 50px,#d0d0c8 50px 60px,#b4bcbc 60px 70px,#c8c8c8 70px 80px,#b8b4bc 80px 90px,#c8c8c4 90px 100px,#c8c8c0 100px 110px,#c4c8d4 110px 120px,#d8d8d4 120px 130px,#d0cccc 130px 140px,#cccccc 140px 150px,#eef2f2 150px 160px)"></div>
<div class="ms" style="left:83px;top:435px;width:170px;height:10px;background:linear-gradient(90deg,#fdfdfd 0px 10px,#f3f3f3 10px 20px,#f9f9f9 20px 30px,#f3f3f3 30px 40px,#f7f7f7 40px 50px,#f8f8f9 50px 60px,#f4f6f6 60px 70px,#f4f4f2 70px 80px,#f4f4f4 80px 90px,#f2f2f2 90px 100px,#f2f2f3 100px 110px,#f2f2f0 110px 120px,#efeff1 120px 130px,#f7f7f7 130px 140px,#f3f3f3 140px 150px,#f9f9f8 150px 160px,#fbfcfc 160px 170px)"></div>
<div class="ms" style="left:263px;top:435px;width:160px;height:10px;background:linear-gradient(90deg,#f7f7f5 0px 10px,#f2f2f3 10px 20px,#f6f6f6 20px 30px,#f4f4f2 30px 40px,#f1f2f2 40px 50px,#e8e8ea 50px 60px,#eff1f1 60px 70px,#f2f1f0 70px 80px,#eaebeb 80px 90px,#efeeef 90px 100px,#f1f1f0 100px 110px,#f1f1f2 110px 120px,#f0f0f2 120px 130px,#f5f5f4 130px 140px,#f7f8f9 140px 150px,#fdfdfd 150px 160px)"></div>
<div class="ms" style="left:443px;top:435px;width:160px;height:10px;background:linear-gradient(90deg,#fcfcfc 0px 10px,#f4f4f4 10px 20px,#f1f3f3 20px 30px,#f7f7f8 30px 40px,#f4f3f4 40px 50px,#f9f9f8 50px 60px,#eff1f1 60px 70px,#f5f5f5 70px 80px,#f3f2f4 80px 90px,#f7f7f7 90px 100px,#f3f3f2 100px 110px,#f3f4f6 110px 120px,#f6f6f6 120px 130px,#f6f5f5 130px 140px,#f5f5f5 140px 150px,#ffffff 150px 160px)"></div>
<div class="ms" style="left:83px;top:465px;width:170px;height:10px;background:linear-gradient(90deg,#fefefe 0px 10px,#fcfcfc 10px 20px,#f9f9f9 20px 30px,#f6f6f6 30px 40px,#fdfdfd 40px 50px,#fdfcfd 50px 60px,#f7f8f8 60px 70px,#fafaf9 70px 80px,#f5f5f5 80px 90px,#f8f8f8 90px 100px,#fafafb 100px 110px,#fafaf9 110px 120px,#f9f9fa 120px 130px,#fefefe 130px 140px,#f8f8f8 140px 150px,#f8f8f8 150px 160px,#fbfbfb 160px 170px)"></div>
<div class="ms" style="left:263px;top:465px;width:160px;height:10px;background:linear-gradient(90deg,#fcfcfb 0px 10px,#f8f8f8 10px 20px,#fbfbfb 20px 30px,#fafaf9 30px 40px,#f9fafa 40px 50px,#f5f5f6 50px 60px,#f7f8f8 60px 70px,#f9f8f7 70px 80px,#f2f2f3 80px 90px,#f9f8f9 90px 100px,#f7f7f6 100px 110px,#fafafa 110px 120px,#f6f6f7 120px 130px,#f8f7f7 130px 140px,#f9f9fa 140px 150px,#fcfcfc 150px 160px)"></div>
<div class="ms" style="left:443px;top:465px;width:160px;height:10px;background:linear-gradient(90deg,#fefefe 0px 10px,#fbfafb 10px 20px,#f6f6f6 20px 30px,#f9f9fa 30px 40px,#faf9fa 40px 50px,#fbfbfa 50px 60px,#f7f8f8 60px 70px,#f8f8f8 70px 80px,#f9f8f9 80px 90px,#f7f7f6 90px 100px,#f8f8f8 100px 110px,#f9f9fa 110px 120px,#fefefd 120px 130px,#fbfbfb 130px 140px,#fcfcfc 140px 150px,#fdfefe 150px 160px)"></div>
<div class="ms" style="left:83px;top:475px;width:170px;height:10px;background:linear-gradient(90deg,#e4e4e4 0px 10px,#c6c6c6 10px 20px,#dcdcdc 20px 30px,#c4c2c4 30px 40px,#dcdadc 40px 50px,#d0ced4 50px 60px,#b4bcbc 60px 70px,#c8c8c0 70px 80px,#bcbabc 80px 90px,#bcbcbc 90px 100px,#b4b4bc 100px 110px,#bcbcb0 110px 120px,#b0b2ba 120px 130px,#dcdcdc 130px 140px,#c4c4c4 140px 150px,#d0cfcd 150px 160px,#e8ecf0 160px 170px)"></div>
<div class="ms" style="left:263px;top:475px;width:160px;height:10px;background:linear-gradient(90deg,#dddbd2 0px 10px,#acacae 10px 20px,#bfbdbf 20px 30px,#c1c2ba 30px 40px,#bcc4c4 40px 50px,#8c8c94 50px 60px,#b6bebe 60px 70px,#bcb8b0 70px 80px,#969ca0 80px 90px,#b0a8b0 90px 100px,#bcbcb4 100px 110px,#b0b0b6 110px 120px,#9c9ca8 120px 130px,#c0bebc 130px 140px,#d8dce0 140px 150px,#f4f4f4 150px 160px)"></div>
<div class="ms" style="left:443px;top:475px;width:160px;height:10px;background:linear-gradient(90deg,#f0eeec 0px 10px,#c8c6c8 10px 20px,#b8c0c0 20px 30px,#e0dfe4 30px 40px,#c8c6cc 40px 50px,#d0d0c8 50px 60px,#b4bcbc 60px 70px,#c8c8c8 70px 80px,#b8b4bc 80px 90px,#c8c8c4 90px 100px,#c8c8c0 100px 110px,#c4c8d4 110px 120px,#d8d8d4 120px 130px,#d0cccc 130px 140px,#cccccc 140px 150px,#eef2f2 150px 160px)"></div>
<div class="ms" style="left:83px;top:485px;width:170px;height:10px;background:linear-gradient(90deg,#fdfdfd 0px 10px,#fafafa 10px 20px,#ffffff 20px 30px,#fefdfe 30px 40px,#fafafa 40px 50px,#fefefe 50px 60px,#fbfbfb 60px 70px,#fbfbfb 70px 80px,#fbfbfb 80px 90px,#fafafa 90px 100px,#f8f8f9 100px 110px,#fafafa 110px 120px,#fafafb 120px 130px,#ffffff 130px 140px,#fafafa 140px 150px,#ffffff 150px 160px,#fcfcfc 160px 170px)"></div>
<div class="ms" style="left:263px;top:485px;width:160px;height:10px;background:linear-gradient(90deg,#fcfcfc 0px 10px,#fdfdfd 10px 20px,#fefefe 20px 30px,#fbfcfb 30px 40px,#f9f9f9 40px 50px,#f9f9f9 50px 60px,#fbfbfb 60px 70px,#fefefe 70px 80px,#f8f8f8 80px 90px,#fafafa 90px 100px,#fefefe 100px 110px,#f8f8f9 110px 120px,#fafafa 120px 130px,#fefefe 130px 140px,#ffffff 140px 150px,#fcfcfc 150px 160px)"></div>
<div class="ms" style="left:443px;top:485px;width:160px;height:10px;background:linear-gradient(90deg,#fbfbfb 0px 10px,#fafafa 10px 20px,#fefefe 20px 30px,#fcfcfc 30px 40px,#fefefe 40px 50px,#ffffff 50px 60px,#fafbfb 60px 70px,#fbfbfb 70px 80px,#fefefe 80px 90px,#fdfdfd 90px 100px,#fbfbfa 100px 110px,#fdfefe 110px 120px,#fcfcfc 120px 130px,#fbfbfb 130px 140px,#f9f9f9 140px 150px,#ffffff 150px 160px)"></div>
  <div class="c n" style="left:33px;top:168px">1</div>
  <div class="c" style="left:628px;top:168px">城市维护建设税</div>
  <div class="c" style="left:808px;top:168px">县城、镇（增值税附征）</div>
  <div class="c" style="left:988px;top:168px">可以开具</div>
  <div class="c n" style="left:33px;top:216px">2</div>
  <div class="c" style="left:628px;top:216px">地方教育附加</div>
  <div class="c" style="left:808px;top:216px">增值税地方教育附加</div>
  <div class="c" style="left:988px;top:216px">可以开具</div>
  <div class="c n" style="left:33px;top:264px">3</div>
  <div class="c" style="left:628px;top:264px">增值税</div>
  <div class="c" style="left:808px;top:264px">商业<i>(17%</i>、<i>16%</i>、<i>13%)</i></div>
  <div class="c" style="left:988px;top:264px">可以开具</div>
  <div class="c n" style="left:33px;top:312px">4</div>
  <div class="c" style="left:628px;top:312px">水利建设专项收入</div>
  <div class="c" style="left:808px;top:312px">地方水利建设基金</div>
  <div class="c" style="left:988px;top:312px">可以开具</div>
  <div class="c n" style="left:33px;top:360px">5</div>
  <div class="c" style="left:628px;top:360px">教育费附加</div>
  <div class="c" style="left:808px;top:360px">增值税教育费附加</div>
  <div class="c" style="left:988px;top:360px">可以开具</div>
  <div class="c n" style="left:33px;top:408px">6</div>
  <div class="c" style="left:628px;top:408px">增值税</div>
  <div class="c" style="left:808px;top:408px">商业<i>(17%</i>、<i>16%</i>、<i>13%)</i></div>
  <div class="c" style="left:988px;top:408px">可以开具</div>
  <div class="c n" style="left:33px;top:456px">7</div>
  <div class="c" style="left:628px;top:456px">水利建设专项收入</div>
  <div class="c" style="left:808px;top:456px">地方水利建设基金</div>
  <div class="c" style="left:988px;top:456px">可以开具</div>
  <div id="msb"><div class="up"></div><div class="th"></div><div class="dn"></div></div>
  <div class="fl"></div>
  <div id="cancel">取消</div>
  <div id="ok">确定</div>
</div>
<div id="red"></div>
<div id="minus"><i></i></div>
<svg id="mascot" style="position:absolute;left:1765px;top:420px;overflow:visible" width="145" height="135" viewBox="0 0 1024 953">
<defs>
  <linearGradient id="cg" x1="0.05" y1="0.1" x2="0.95" y2="0.72">
    <stop offset="0" stop-color="#b9dcf8" stop-opacity="0.6"/>
    <stop offset="0.15" stop-color="#acd7f7" stop-opacity="0.95"/>
    <stop offset="0.5" stop-color="#86c6f4"/>
    <stop offset="0.8" stop-color="#45a5ef"/>
    <stop offset="1" stop-color="#1c8ef0"/>
  </linearGradient>
  <clipPath id="cc"><circle cx="582" cy="505" r="380"/></clipPath>
  <filter id="gl" x="-30%" y="-30%" width="160%" height="160%"><feGaussianBlur stdDeviation="9"/></filter>
  <filter id="gl2" x="-30%" y="-30%" width="160%" height="160%"><feGaussianBlur stdDeviation="22"/></filter>
</defs>
<!-- soft glow on left part of disc -->
<path d="M582 125 A380 380 0 0 0 582 885" fill="none" stroke="#3f8cf5" stroke-width="26" opacity="0.55" filter="url(#gl2)"/>
<circle cx="582" cy="505" r="380" fill="url(#cg)"/>
<g clip-path="url(#cc)">
  <ellipse cx="322" cy="452" rx="102" ry="50" fill="#cfeafb" opacity="0.75"/>
  <ellipse cx="390" cy="575" rx="60" ry="31" fill="#cfeafb" opacity="0.85"/>
  <ellipse cx="445" cy="672" rx="36" ry="18" fill="#cfeafb" opacity="0.8"/>
  <!-- hair back -->
  <path d="M452 430 C430 540 470 610 530 660 L800 660 C860 610 895 540 872 430 C840 380 480 380 452 430Z" fill="#151314"/>
  <!-- ears -->
  <ellipse cx="497" cy="606" rx="29" ry="36" fill="#fbe6dd" stroke="#3b2a28" stroke-width="4"/>
  <ellipse cx="836" cy="606" rx="29" ry="36" fill="#fbe6dd" stroke="#3b2a28" stroke-width="4"/>
  <!-- neck -->
  <path d="M632 715h68v60h-68z" fill="#f6d9cd"/>
  <!-- shirt -->
  <path d="M535 830 C548 775 600 752 640 748 L667 785 L695 748 C735 752 785 775 805 830 L815 960 L530 960Z" fill="#a7d3f6" stroke="#3f6fa8" stroke-width="3"/>
  <path d="M640 746 L667 790 L624 796Z" fill="#d6ecfc" stroke="#3f6fa8" stroke-width="3"/>
  <path d="M695 746 L668 790 L712 796Z" fill="#d6ecfc" stroke="#3f6fa8" stroke-width="3"/>
  <path d="M655 782 L681 782 L690 872 L668 892 L648 872Z" fill="#e8432b" stroke="#a52a18" stroke-width="2"/>
  <path d="M560 772 L622 752 L630 772 L568 794Z" fill="#1c3a72"/>
  <path d="M772 772 L712 752 L704 772 L764 794Z" fill="#1c3a72"/>
  <rect x="592" y="806" width="48" height="24" rx="6" fill="#cfe7fa" stroke="#5d8fc4" stroke-width="3"/>
  <rect x="708" y="806" width="48" height="24" rx="6" fill="#cfe7fa" stroke="#5d8fc4" stroke-width="3"/>
  <rect x="712" y="790" width="32" height="11" fill="#f0553a"/>
  <!-- arm + hand -->
  <path d="M478 842 L540 800 L566 850 L548 960 L470 960Z" fill="#a7d3f6" stroke="#3f6fa8" stroke-width="3"/>
  <path d="M471 722 C480 711 494 716 496 730 L508 772 L520 748 C527 736 542 742 538 756 L528 806 C522 838 490 842 475 820 L464 792 C456 772 462 762 472 768 Z" fill="#fbe9e1" stroke="#4a3836" stroke-width="4"/>
  <!-- face -->
  <path d="M512 575 C512 470 580 440 665 440 C750 440 820 470 820 575 C820 690 740 738 665 738 C590 738 512 690 512 575Z" fill="#fcebe4" stroke="#3b2a28" stroke-width="4"/>
  <!-- fringe -->
  <path d="M452 430 C450 500 470 560 520 585 C520 520 560 490 610 478 L640 440Z" fill="#151314"/>
  <path d="M872 430 C876 500 860 560 814 585 C812 520 790 495 745 478 L700 440Z" fill="#151314"/>
  <!-- brows / lashes -->
  <path d="M545 532 Q585 505 625 525" fill="none" stroke="#2a1a18" stroke-width="5"/>
  <path d="M705 525 Q745 505 785 532" fill="none" stroke="#2a1a18" stroke-width="5"/>
  <path d="M543 578 Q585 535 628 572" fill="none" stroke="#1a1010" stroke-width="9"/>
  <path d="M700 572 Q742 535 785 578" fill="none" stroke="#1a1010" stroke-width="9"/>
  <circle cx="586" cy="592" r="33" fill="#6a3424"/><circle cx="586" cy="595" r="19" fill="#2b1510"/>
  <circle cx="742" cy="592" r="33" fill="#6a3424"/><circle cx="742" cy="595" r="19" fill="#2b1510"/>
  <circle cx="574" cy="580" r="10" fill="#fff"/><circle cx="598" cy="606" r="5" fill="#fff"/>
  <circle cx="730" cy="580" r="10" fill="#fff"/><circle cx="754" cy="606" r="5" fill="#fff"/>
  <ellipse cx="565" cy="648" rx="23" ry="10" fill="#f8b39f" opacity="0.85"/>
  <ellipse cx="774" cy="646" rx="23" ry="10" fill="#f8b39f" opacity="0.85"/>
  <circle cx="663" cy="632" r="4" fill="#f09a8a"/>
  <path d="M641 660 Q665 684 690 660" fill="none" stroke="#3a2020" stroke-width="5" stroke-linecap="round"/>
  <!-- cap -->
  <circle cx="484" cy="374" r="34" fill="#162f5e"/>
  <circle cx="842" cy="374" r="34" fill="#162f5e"/>
  <path d="M500 392 C490 300 580 262 662 262 C744 262 835 300 825 392 C800 360 524 360 500 392Z" fill="#1e3d7b"/>
  <path d="M498 388 Q662 318 826 388 L812 446 Q662 500 514 446Z" fill="#14284f"/>
  <path d="M520 398 Q662 340 804 398 L801 412 Q662 356 523 412Z" fill="#f2f4f7"/>
  <circle cx="660" cy="294" r="25" fill="#e33a2a" stroke="#f3b53c" stroke-width="7"/>
  <path d="M618 322 L660 344 L702 322 L694 338 L660 358 L626 338Z" fill="#dfe3e8"/>
</g>
<!-- text -->
<g font-family="'Liberation Sans','Noto Sans CJK SC',sans-serif" font-weight="700" font-size="204" text-anchor="middle">
  <g fill="#2268ea" stroke="#2268ea" stroke-width="30" stroke-linejoin="round" filter="url(#gl)" opacity="0.8">
    <text x="452" y="238">征</text><text x="222" y="365">纳</text><text x="170" y="618">互</text><text x="318" y="840">动</text>
  </g>
  <g fill="#fff" stroke="#3380f4" stroke-width="21" stroke-linejoin="round" paint-order="stroke">
    <text x="452" y="238">征</text><text x="222" y="365">纳</text><text x="170" y="618">互</text><text x="318" y="840">动</text>
  </g>
</g>
</svg>

</body>
</html>
